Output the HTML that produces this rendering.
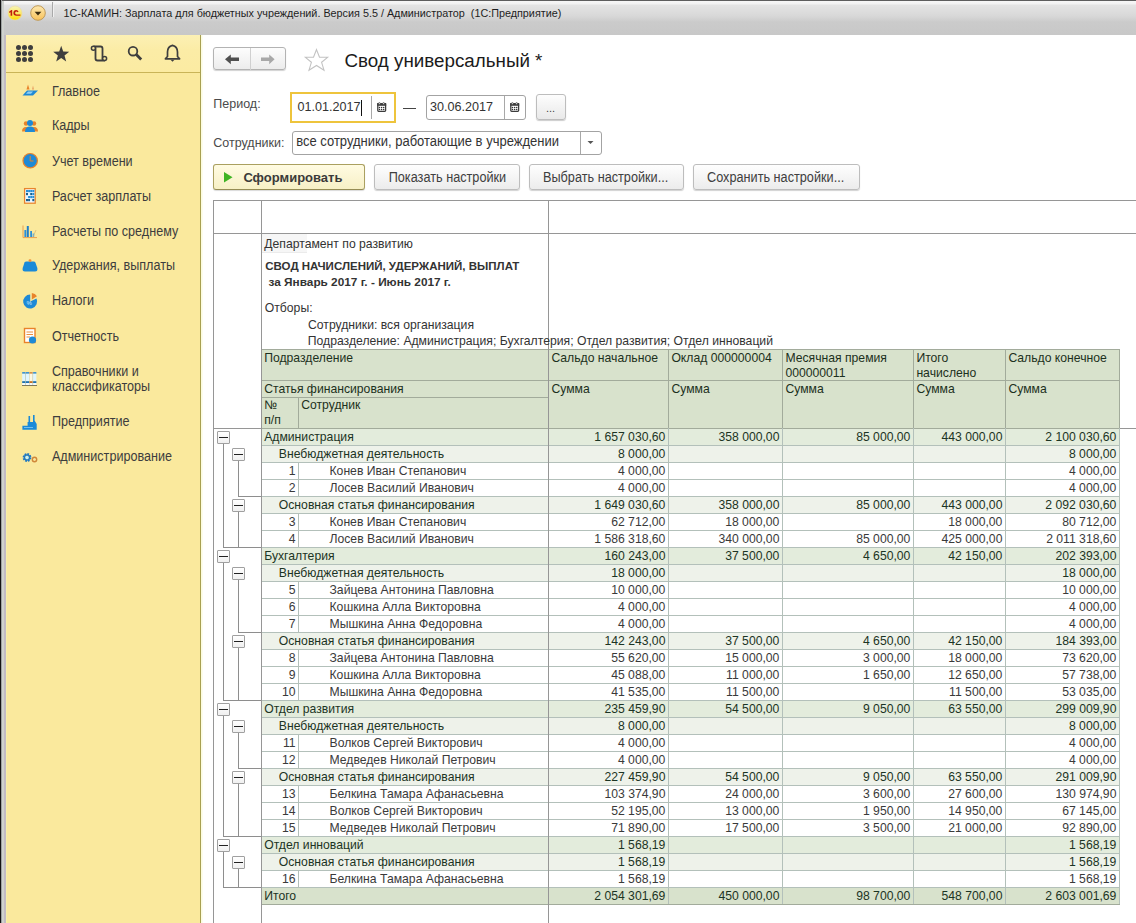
<!DOCTYPE html><html><head><meta charset="utf-8"><style>
html,body{margin:0;padding:0;}
body{width:1136px;height:923px;overflow:hidden;position:relative;background:#fff;font-family:"Liberation Sans", sans-serif;}
.t{position:absolute;white-space:pre;}
.r{position:absolute;}
svg{position:absolute;overflow:visible;}
</style></head><body>
<div class="r" style="left:0px;top:0px;width:1136px;height:35px;background:linear-gradient(#5e5e5e 0px,#5e5e5e 1px,#f7f7f7 1px,#f2f2f2 4px,#e4e4e4 5px,#d8d8d8 16px,#cbcbcb 22px,#c8c8c8 34px)"></div>
<div class="r" style="left:0px;top:0px;width:1px;height:923px;background:#151515"></div>
<div class="r" style="left:1px;top:0px;width:1px;height:923px;background:#9ea2a2"></div>
<div class="r" style="left:2px;top:1px;width:2px;height:922px;background:#cfd2ce"></div>
<div class="r" style="left:4px;top:35px;width:2px;height:888px;background:#c2bbc4"></div>
<svg style="left:6px;top:4px" width="20" height="20" viewBox="0 0 20 20">
<defs><linearGradient id="lg" x1="0" y1="0" x2="0" y2="1"><stop offset="0" stop-color="#f6f4b8"/><stop offset="0.55" stop-color="#fbe860"/><stop offset="1" stop-color="#ffdc00"/></linearGradient></defs>
<circle cx="9" cy="9" r="7" fill="url(#lg)" stroke="#ead9a0" stroke-width="0.6"/>
<path d="M3.2 7.4 L5.4 6 L6.2 6 L6.2 11.8 L4.6 11.8 L4.6 8.2 L3.2 8.9 Z" fill="#c01c0c"/>
<path d="M12.6 7.6 Q11.9 6.1 10.2 6.1 Q7.4 6.1 7.4 9 Q7.4 11.8 10.3 11.8 L14.4 11.8 L14.4 10.4 L10.4 10.4 Q9.1 10.4 9.1 9 Q9.1 7.5 10.3 7.5 Q11.1 7.5 11.3 8.2 Z" fill="#c01c0c"/>
</svg>
<svg style="left:29px;top:4px" width="20" height="20" viewBox="0 0 20 20">
<defs><linearGradient id="dg" x1="0" y1="0" x2="0" y2="1"><stop offset="0" stop-color="#fde9b0"/><stop offset="1" stop-color="#f8c25a"/></linearGradient></defs>
<circle cx="9" cy="9" r="7.3" fill="url(#dg)" stroke="#c09a58" stroke-width="1"/>
<path d="M5.6 7.8 L12.4 7.8 L9 11.4 Z" fill="#3a2c10"/>
</svg>
<div class="r" style="left:52px;top:2px;width:1px;height:15px;background:#a9a9a9"></div>
<div class="r" style="left:53px;top:2px;width:1px;height:15px;background:#f0f0f0"></div>
<div class="t" style="left:63.5px;top:7.13px;font-size:10.8px;line-height:12.409px;color:#1e1e1e;font-weight:normal;">1С-КАМИН: Зарплата для бюджетных учреждений. Версия 5.5 / Администратор  (1С:Предприятие)</div>
<div class="r" style="left:6px;top:35px;width:194px;height:888px;background:#fae99d"></div>
<div class="r" style="left:6px;top:35px;width:1px;height:888px;background:#f6efaa"></div>
<div class="r" style="left:200px;top:35px;width:1px;height:888px;background:#a8a052"></div>
<div class="r" style="left:201px;top:35px;width:2px;height:888px;background:linear-gradient(90deg,#fbfbd8,#fefef4)"></div>
<div class="r" style="left:6px;top:35px;width:194px;height:37px;background:linear-gradient(#fcf0b4,#fbeca6 40%,#fbeba2)"></div>
<div class="r" style="left:6px;top:72px;width:194px;height:1px;background:#c9b458"></div>
<svg style="left:0;top:0" width="200" height="72"><circle cx="18.5" cy="47.4" r="2.5" fill="#3e3e3e"/><circle cx="24.5" cy="47.4" r="2.5" fill="#3e3e3e"/><circle cx="30.5" cy="47.4" r="2.5" fill="#3e3e3e"/><circle cx="18.5" cy="53.4" r="2.5" fill="#3e3e3e"/><circle cx="24.5" cy="53.4" r="2.5" fill="#3e3e3e"/><circle cx="30.5" cy="53.4" r="2.5" fill="#3e3e3e"/><circle cx="18.5" cy="59.4" r="2.5" fill="#3e3e3e"/><circle cx="24.5" cy="59.4" r="2.5" fill="#3e3e3e"/><circle cx="30.5" cy="59.4" r="2.5" fill="#3e3e3e"/><path d="M61.2 45.8 L63.2 51.6 L69.2 51.8 L64.5 55.6 L66.2 61.5 L61.2 58 L56.2 61.5 L57.9 55.6 L53.2 51.8 L59.2 51.6 Z" fill="#3e3e3e"/><path d="M93.5 46.5 L100.5 46.5 Q102.5 46.5 102.5 48.5 L102.5 58.5 Q102.5 60.5 104.5 60.5 L97.5 60.5 Q95.5 60.5 95.5 58.5 L95.5 48.5 Q95.5 46.5 93.5 46.5" fill="none" stroke="#3e3e3e" stroke-width="1.8" stroke-linejoin="round"/><circle cx="93.4" cy="48.3" r="2" fill="#fae99d" stroke="#3e3e3e" stroke-width="1.5"/><circle cx="104.6" cy="58.6" r="2" fill="#fae99d" stroke="#3e3e3e" stroke-width="1.5"/><circle cx="133" cy="51.2" r="4.3" fill="none" stroke="#3e3e3e" stroke-width="1.8"/><path d="M136.3 54.5 L141.2 59.4" stroke="#3e3e3e" stroke-width="2.8"/><path d="M172.5 45.3 Q177.5 46.5 177.5 52 L177.5 56.5 L179.6 58.8 L165.4 58.8 L167.5 56.5 L167.5 52 Q167.5 46.5 172.5 45.3 Z" fill="none" stroke="#3e3e3e" stroke-width="1.7" stroke-linejoin="round"/><path d="M170.5 59.8 L174.5 59.8 L172.5 61.8 Z" fill="#3e3e3e"/></svg>
<div class="t" style="left:51.9px;top:84.70px;font-size:12.6px;line-height:14.477px;color:#3d3d3d;font-weight:normal;transform:scaleY(1.1);transform-origin:0 11.60px;">Главное</div>
<div class="t" style="left:51.9px;top:119.40px;font-size:12.6px;line-height:14.477px;color:#3d3d3d;font-weight:normal;transform:scaleY(1.1);transform-origin:0 11.60px;">Кадры</div>
<div class="t" style="left:51.9px;top:154.50px;font-size:12.6px;line-height:14.477px;color:#3d3d3d;font-weight:normal;transform:scaleY(1.1);transform-origin:0 11.60px;">Учет времени</div>
<div class="t" style="left:51.9px;top:189.60px;font-size:12.6px;line-height:14.477px;color:#3d3d3d;font-weight:normal;transform:scaleY(1.1);transform-origin:0 11.60px;">Расчет зарплаты</div>
<div class="t" style="left:51.9px;top:224.60px;font-size:12.6px;line-height:14.477px;color:#3d3d3d;font-weight:normal;transform:scaleY(1.1);transform-origin:0 11.60px;">Расчеты по среднему</div>
<div class="t" style="left:51.9px;top:259.40px;font-size:12.6px;line-height:14.477px;color:#3d3d3d;font-weight:normal;transform:scaleY(1.1);transform-origin:0 11.60px;">Удержания, выплаты</div>
<div class="t" style="left:51.9px;top:294.20px;font-size:12.6px;line-height:14.477px;color:#3d3d3d;font-weight:normal;transform:scaleY(1.1);transform-origin:0 11.60px;">Налоги</div>
<div class="t" style="left:51.9px;top:329.60px;font-size:12.6px;line-height:14.477px;color:#3d3d3d;font-weight:normal;transform:scaleY(1.1);transform-origin:0 11.60px;">Отчетность</div>
<div class="t" style="left:51.9px;top:364.80px;font-size:12.6px;line-height:14.477px;color:#3d3d3d;font-weight:normal;transform:scaleY(1.1);transform-origin:0 11.60px;">Справочники и</div>
<div class="t" style="left:51.9px;top:379.90px;font-size:12.6px;line-height:14.477px;color:#3d3d3d;font-weight:normal;transform:scaleY(1.1);transform-origin:0 11.60px;">классификаторы</div>
<div class="t" style="left:51.9px;top:415.20px;font-size:12.6px;line-height:14.477px;color:#3d3d3d;font-weight:normal;transform:scaleY(1.1);transform-origin:0 11.60px;">Предприятие</div>
<div class="t" style="left:51.9px;top:450.40px;font-size:12.6px;line-height:14.477px;color:#3d3d3d;font-weight:normal;transform:scaleY(1.1);transform-origin:0 11.60px;">Администрирование</div>
<svg style="left:0;top:0" width="200" height="480">
<!-- Главное -->
<path d="M22.5 95.5 L27 90.5 L38 90.5 L33 95.5 Z" fill="#1e8ad6"/>
<path d="M26 93.8 L28 91.6 L33 91.6 L31 93.8 Z" fill="#8fd0f5"/>
<path d="M26.5 89.5 L28 84.5 L29.5 89.5 Z" fill="#e8832a"/>
<path d="M32 89.5 L33 85.5 L34 89.5 Z" fill="#e8a060"/>
<!-- Кадры -->
<circle cx="26" cy="123.5" r="2.2" fill="#e8832a"/><circle cx="34" cy="123.5" r="2.2" fill="#e8832a"/>
<path d="M22 131.5 Q22 127 26 127 Q30 127 30 131.5Z" fill="#e8832a"/><path d="M30 131.5 Q30 127 34 127 Q38 127 38 131.5Z" fill="#e8832a"/>
<circle cx="30" cy="123" r="3" fill="#1e8ad6"/>
<path d="M25 132 Q25 126.5 30 126.5 Q35 126.5 35 132Z" fill="#1e8ad6"/>
<!-- Учет времени -->
<circle cx="30.2" cy="160.7" r="7.2" fill="#1e8ad6" stroke="#e8832a" stroke-width="1.2"/>
<path d="M30.2 156 L30.2 161 L33.5 161" stroke="#e8832a" stroke-width="1" fill="none"/>
<!-- Расчет зарплаты -->
<rect x="24.6" y="188.6" width="10.6" height="14.6" fill="#f4fbff" stroke="#e8862e" stroke-width="1.3"/>
<rect x="26.00" y="190.0" width="2" height="2.2" fill="#2a8fd6"/>
<rect x="28.10" y="190.0" width="2" height="2.2" fill="#2a8fd6"/>
<rect x="30.20" y="190.0" width="2" height="2.2" fill="#2a8fd6"/>
<rect x="32.30" y="190.0" width="2" height="2.2" fill="#2a8fd6"/>
<rect x="26.00" y="193.0" width="2" height="2.2" fill="#1a5f8a"/>
<rect x="28.10" y="193.0" width="2" height="2.2" fill="#dff4ff"/>
<rect x="30.20" y="193.0" width="2" height="2.2" fill="#1a5f8a"/>
<rect x="32.30" y="193.0" width="2" height="2.2" fill="#2a8fd6"/>
<rect x="26.00" y="196.0" width="2" height="2.2" fill="#dff4ff"/>
<rect x="28.10" y="196.0" width="2" height="2.2" fill="#2a8fd6"/>
<rect x="30.20" y="196.0" width="2" height="2.2" fill="#2a8fd6"/>
<rect x="32.30" y="196.0" width="2" height="2.2" fill="#2a8fd6"/>
<rect x="26.00" y="199.0" width="2" height="2.2" fill="#1a5f8a"/>
<rect x="28.10" y="199.0" width="2" height="2.2" fill="#1a5f8a"/>
<rect x="30.20" y="199.0" width="2" height="2.2" fill="#dff4ff"/>
<rect x="32.30" y="199.0" width="2" height="2.2" fill="#1a5f8a"/>
<!-- Расчеты по среднему -->
<path d="M23 225.5 L23 237.6 L37 237.6" stroke="#e9a050" stroke-width="1" fill="none"/>
<rect x="24.4" y="230" width="1.9" height="7" fill="#2a8fd6"/><rect x="26.8" y="226" width="2" height="11" fill="#1f7ec8"/>
<rect x="30.2" y="231" width="1.8" height="6" fill="#2a8fd6"/><rect x="32.6" y="233.5" width="1.6" height="3.5" fill="#5aaee8"/>
<path d="M33 237 L36 230" stroke="#c8b070" stroke-width="0.6"/>
<!-- Удержания -->
<path d="M24.5 262.6 Q25 261.5 26.5 261.5 L33.5 261.5 Q35 261.5 35.5 262.8 L37.3 268 Q38 271.6 35 271.6 L25 271.6 Q22 271.6 22.7 268 Z" fill="#1a8ad8"/>
<circle cx="30" cy="260.6" r="1.4" fill="#f0903a"/>
<!-- Налоги -->
<path d="M30.2 301.5 L30.2 294.5 A7 7 0 1 0 36.5 298.5 Z" fill="#1e8ad6"/>
<path d="M31.8 299.5 L31.8 293 A6.5 6.5 0 0 1 37 296.2 Z" fill="#e8832a"/>
<text x="26.5" y="305" font-family="Liberation Sans" font-size="6" fill="#cfeaff">%</text>
<!-- Отчетность -->
<rect x="24.5" y="328.5" width="10.5" height="14" fill="#fff" stroke="#e8832a" stroke-width="1.4"/>
<path d="M26.5 332 L33 332 M26.5 334.5 L33 334.5 M26.5 337 L30 337" stroke="#e8832a" stroke-width="0.9"/>
<circle cx="32.5" cy="340" r="3.6" fill="#1e8ad6"/>
<!-- Справочники -->
<rect x="22.20" y="372" width="3.2" height="1.8" fill="#3d93d2"/>
<rect x="22.20" y="373.8" width="3.2" height="7.4" fill="#dff5ff"/>
<rect x="22.20" y="381.2" width="3.2" height="1.9" fill="#1a70b4"/>
<rect x="22.20" y="383.1" width="3.2" height="2" fill="#f4fbff"/>
<rect x="25.40" y="372" width="0.45" height="13" fill="#8aa8b8"/>
<rect x="25.85" y="372" width="3.2" height="1.8" fill="#3d93d2"/>
<rect x="25.85" y="373.8" width="3.2" height="7.4" fill="#dff5ff"/>
<rect x="25.85" y="381.2" width="3.2" height="1.9" fill="#1a70b4"/>
<rect x="25.85" y="383.1" width="3.2" height="2" fill="#f4fbff"/>
<rect x="29.05" y="372" width="0.45" height="13" fill="#8aa8b8"/>
<rect x="29.50" y="372" width="3.2" height="1.8" fill="#d9904a"/>
<rect x="29.50" y="373.8" width="3.2" height="7.4" fill="#fff8e0"/>
<rect x="29.50" y="381.2" width="3.2" height="1.9" fill="#c66f22"/>
<rect x="29.50" y="383.1" width="3.2" height="2" fill="#f4fbff"/>
<rect x="32.70" y="372" width="0.45" height="13" fill="#8aa8b8"/>
<rect x="33.15" y="372" width="3.2" height="1.8" fill="#3d93d2"/>
<rect x="33.15" y="373.8" width="3.2" height="7.4" fill="#dff5ff"/>
<rect x="33.15" y="381.2" width="3.2" height="1.9" fill="#1a70b4"/>
<rect x="33.15" y="383.1" width="3.2" height="2" fill="#f4fbff"/>
<rect x="22" y="385.1" width="15" height="0.9" fill="#6f6a50"/>
<!-- Предприятие -->
<path d="M22.4 429.7 L22.4 425.8 L27.6 425.8 L27.6 422 L28.5 422 L28.5 416 L30.1 416 L30.1 422 L33 422 L33 415 L34.6 415 L34.6 420.5 L36.7 424 L36.7 429.7 Z" fill="#1a8ad8"/>
<rect x="24" y="427" width="9" height="0.9" fill="#7cc4f0"/>
<!-- Администрирование -->
<circle cx="27" cy="457.5" r="1.6" fill="#c4f2ff"/><circle cx="27" cy="457.5" r="3.2" fill="none" stroke="#1f78c2" stroke-width="2.4" stroke-dasharray="1.6 0.9"/>
<circle cx="27" cy="457.5" r="2.6" fill="none" stroke="#1f78c2" stroke-width="1.4"/>
<circle cx="34.5" cy="459.5" r="2.2" fill="none" stroke="#d0883a" stroke-width="1.4"/>
</svg>
<div class="r" style="left:213px;top:47px;width:73px;height:23px;box-sizing:border-box;border:1px solid #b3b3b3;border-radius:3px;background:linear-gradient(#fdfdfd,#ececec);box-shadow:0 1px 1px rgba(0,0,0,0.18)"></div>
<div class="r" style="left:250px;top:48px;width:1px;height:22px;background:#d0d0d0"></div>
<svg style="left:0;top:0" width="400" height="90">
<path d="M225 59.3 L230.8 54.4 L230.8 57.6 L239 57.6 L239 61 L230.8 61 L230.8 64.2 Z" fill="#4f4f4f"/>
<path d="M274.6 59.3 L269.2 54.4 L269.2 57.6 L261 57.6 L261 61 L269.2 61 L269.2 64.2 Z" fill="#a8a8a8"/>
<path d="M316.5 49.6 L319.5 57.3 L327.6 57.3 L321.6 62.3 L324 70.2 L316.5 65.5 L309 70.2 L311.4 62.3 L305.4 57.3 L313.5 57.3 Z" fill="none" stroke="#c2c2c2" stroke-width="1.1" stroke-linejoin="miter"/>
</svg>
<div class="t" style="left:344.5px;top:50.09px;font-size:18.8px;line-height:21.601px;color:#1b1b1b;font-weight:normal;">Свод универсальный *</div>
<div class="t" style="left:213.3px;top:96.69px;font-size:12.5px;line-height:14.363px;color:#4a4a4a;font-weight:normal;transform:scaleY(1.08);transform-origin:0 11.51px;">Период:</div>
<div class="r" style="left:290px;top:92px;width:106px;height:31px;box-sizing:border-box;border:2px solid #eec43c;background:#fff"></div>
<div class="t" style="left:297.5px;top:100.40px;font-size:12.6px;line-height:14.477px;color:#333;font-weight:normal;transform:scaleY(1.08);transform-origin:0 11.60px;">01.01.2017</div>
<div class="r" style="left:361px;top:100px;width:1px;height:16px;background:#111"></div>
<div class="r" style="left:371px;top:96px;width:1px;height:23px;background:#a8a8a8"></div>
<svg style="left:0;top:0" width="600" height="130"><rect x="377.8" y="103.6" width="7.8" height="7.8" rx="0.8" fill="#fff" stroke="#3c3c3c" stroke-width="1.3"/><rect x="377.2" y="103" width="9" height="2.8" fill="#3c3c3c"/><circle cx="379.4" cy="103.5" r="0.9" fill="#fff" stroke="#3c3c3c" stroke-width="0.7"/><circle cx="383.59999999999997" cy="103.5" r="0.9" fill="#fff" stroke="#3c3c3c" stroke-width="0.7"/><circle cx="379.5" cy="107.4" r="0.75" fill="#333"/><circle cx="379.5" cy="109.4" r="0.75" fill="#333"/><circle cx="381.6" cy="107.4" r="0.75" fill="#333"/><circle cx="381.6" cy="109.4" r="0.75" fill="#333"/><circle cx="383.7" cy="107.4" r="0.75" fill="#333"/><circle cx="383.7" cy="109.4" r="0.75" fill="#333"/></svg>
<div class="r" style="left:403px;top:108px;width:13px;height:1px;background:#444"></div>
<div class="r" style="left:426px;top:95px;width:100px;height:25px;box-sizing:border-box;border:1px solid #a3a3a3;border-radius:3px;background:#fff"></div>
<div class="t" style="left:430px;top:100.10px;font-size:12.6px;line-height:14.477px;color:#333;font-weight:normal;transform:scaleY(1.08);transform-origin:0 11.60px;">30.06.2017</div>
<div class="r" style="left:504px;top:96px;width:1px;height:23px;background:#a8a8a8"></div>
<svg style="left:0;top:0" width="600" height="130"><rect x="510.8" y="103.6" width="7.8" height="7.8" rx="0.8" fill="#fff" stroke="#3c3c3c" stroke-width="1.3"/><rect x="510.2" y="103" width="9" height="2.8" fill="#3c3c3c"/><circle cx="512.4" cy="103.5" r="0.9" fill="#fff" stroke="#3c3c3c" stroke-width="0.7"/><circle cx="516.6" cy="103.5" r="0.9" fill="#fff" stroke="#3c3c3c" stroke-width="0.7"/><circle cx="512.5" cy="107.4" r="0.75" fill="#333"/><circle cx="512.5" cy="109.4" r="0.75" fill="#333"/><circle cx="514.6" cy="107.4" r="0.75" fill="#333"/><circle cx="514.6" cy="109.4" r="0.75" fill="#333"/><circle cx="516.7" cy="107.4" r="0.75" fill="#333"/><circle cx="516.7" cy="109.4" r="0.75" fill="#333"/></svg>
<div class="r" style="left:536px;top:94px;width:30px;height:26px;box-sizing:border-box;border:1px solid #bdbdbd;border-radius:3px;background:linear-gradient(#fdfdfd,#e9e9e9);box-shadow:0 1px 1px rgba(0,0,0,0.2)"></div>
<div class="t" style="left:546px;top:102.05px;font-size:11px;line-height:12.639px;color:#444;font-weight:normal;">...</div>
<div class="t" style="left:213.3px;top:136.19px;font-size:12.5px;line-height:14.363px;color:#4a4a4a;font-weight:normal;transform:scaleY(1.08);transform-origin:0 11.51px;">Сотрудники:</div>
<div class="r" style="left:292px;top:131px;width:310px;height:24px;box-sizing:border-box;border:1px solid #a3a3a3;border-radius:3px;background:#fff"></div>
<div class="t" style="left:296.2px;top:135.44px;font-size:13px;line-height:14.937px;color:#333;font-weight:normal;transform:scaleY(1.07);transform-origin:0 11.97px;">все сотрудники, работающие в учреждении</div>
<div class="r" style="left:580px;top:132px;width:1px;height:22px;background:#a8a8a8"></div>
<svg style="left:586px;top:140px" width="10" height="6"><path d="M1.5 1 L7.5 1 L4.5 4 Z" fill="#555"/></svg>
<div class="r" style="left:213px;top:164px;width:152px;height:26px;box-sizing:border-box;border:1px solid #aaa060;border-bottom-color:#958c55;border-radius:3px;background:linear-gradient(#fffbe2,#f7f0c6);box-shadow:0 1px 1px rgba(0,0,0,0.15)"></div>
<svg style="left:222px;top:170px" width="14" height="14"><path d="M2 2 L10.5 7.3 L2 12.6 Z" fill="#3fb424"/></svg>
<div class="t" style="left:243.4px;top:170.83px;font-size:13px;line-height:14.937px;color:#3a3a3a;font-weight:bold;transform:scaleY(1.05);transform-origin:0 11.97px;">Сформировать</div>
<div class="r" style="left:374px;top:164px;width:146px;height:26px;box-sizing:border-box;border:1px solid #bdbdbd;border-radius:3px;background:linear-gradient(#fefefe,#ececec);box-shadow:0 1px 1px rgba(0,0,0,0.18)"></div>
<div class="t" style="left:388.7px;top:170.51px;font-size:12.7px;line-height:14.592px;color:#404040;font-weight:normal;transform:scaleY(1.08);transform-origin:0 11.70px;">Показать настройки</div>
<div class="r" style="left:529px;top:164px;width:155px;height:26px;box-sizing:border-box;border:1px solid #bdbdbd;border-radius:3px;background:linear-gradient(#fefefe,#ececec);box-shadow:0 1px 1px rgba(0,0,0,0.18)"></div>
<div class="t" style="left:543px;top:170.51px;font-size:12.7px;line-height:14.592px;color:#404040;font-weight:normal;transform:scaleY(1.08);transform-origin:0 11.70px;">Выбрать настройки...</div>
<div class="r" style="left:693px;top:164px;width:167px;height:26px;box-sizing:border-box;border:1px solid #bdbdbd;border-radius:3px;background:linear-gradient(#fefefe,#ececec);box-shadow:0 1px 1px rgba(0,0,0,0.18)"></div>
<div class="t" style="left:707px;top:170.51px;font-size:12.7px;line-height:14.592px;color:#404040;font-weight:normal;transform:scaleY(1.08);transform-origin:0 11.70px;">Сохранить настройки...</div>
<div class="r" style="left:261px;top:349px;width:858px;height:79px;background:#d8e2cc"></div>
<div class="r" style="left:262px;top:429px;width:857px;height:16px;background:#e3ecdc"></div>
<div class="r" style="left:262px;top:446px;width:857px;height:16px;background:#eef2ea"></div>
<div class="r" style="left:262px;top:497px;width:857px;height:16px;background:#eef2ea"></div>
<div class="r" style="left:262px;top:548px;width:857px;height:16px;background:#e3ecdc"></div>
<div class="r" style="left:262px;top:565px;width:857px;height:16px;background:#eef2ea"></div>
<div class="r" style="left:262px;top:633px;width:857px;height:16px;background:#eef2ea"></div>
<div class="r" style="left:262px;top:701px;width:857px;height:16px;background:#e3ecdc"></div>
<div class="r" style="left:262px;top:718px;width:857px;height:16px;background:#eef2ea"></div>
<div class="r" style="left:262px;top:769px;width:857px;height:16px;background:#eef2ea"></div>
<div class="r" style="left:262px;top:837px;width:857px;height:16px;background:#e3ecdc"></div>
<div class="r" style="left:262px;top:854px;width:857px;height:16px;background:#eef2ea"></div>
<div class="r" style="left:262px;top:888px;width:857px;height:16px;background:#d8e2cc"></div>
<div class="r" style="left:261px;top:428px;width:859px;height:1px;background:#a2ab9b"></div>
<div class="r" style="left:261px;top:445px;width:859px;height:1px;background:#b3c0ba"></div>
<div class="r" style="left:261px;top:462px;width:859px;height:1px;background:#b3c0ba"></div>
<div class="r" style="left:261px;top:479px;width:859px;height:1px;background:#b3c0ba"></div>
<div class="r" style="left:261px;top:496px;width:859px;height:1px;background:#b3c0ba"></div>
<div class="r" style="left:261px;top:513px;width:859px;height:1px;background:#b3c0ba"></div>
<div class="r" style="left:261px;top:530px;width:859px;height:1px;background:#b3c0ba"></div>
<div class="r" style="left:261px;top:547px;width:859px;height:1px;background:#b3c0ba"></div>
<div class="r" style="left:261px;top:564px;width:859px;height:1px;background:#b3c0ba"></div>
<div class="r" style="left:261px;top:581px;width:859px;height:1px;background:#b3c0ba"></div>
<div class="r" style="left:261px;top:598px;width:859px;height:1px;background:#b3c0ba"></div>
<div class="r" style="left:261px;top:615px;width:859px;height:1px;background:#b3c0ba"></div>
<div class="r" style="left:261px;top:632px;width:859px;height:1px;background:#b3c0ba"></div>
<div class="r" style="left:261px;top:649px;width:859px;height:1px;background:#b3c0ba"></div>
<div class="r" style="left:261px;top:666px;width:859px;height:1px;background:#b3c0ba"></div>
<div class="r" style="left:261px;top:683px;width:859px;height:1px;background:#b3c0ba"></div>
<div class="r" style="left:261px;top:700px;width:859px;height:1px;background:#b3c0ba"></div>
<div class="r" style="left:261px;top:717px;width:859px;height:1px;background:#b3c0ba"></div>
<div class="r" style="left:261px;top:734px;width:859px;height:1px;background:#b3c0ba"></div>
<div class="r" style="left:261px;top:751px;width:859px;height:1px;background:#b3c0ba"></div>
<div class="r" style="left:261px;top:768px;width:859px;height:1px;background:#b3c0ba"></div>
<div class="r" style="left:261px;top:785px;width:859px;height:1px;background:#b3c0ba"></div>
<div class="r" style="left:261px;top:802px;width:859px;height:1px;background:#b3c0ba"></div>
<div class="r" style="left:261px;top:819px;width:859px;height:1px;background:#b3c0ba"></div>
<div class="r" style="left:261px;top:836px;width:859px;height:1px;background:#b3c0ba"></div>
<div class="r" style="left:261px;top:853px;width:859px;height:1px;background:#b3c0ba"></div>
<div class="r" style="left:261px;top:870px;width:859px;height:1px;background:#b3c0ba"></div>
<div class="r" style="left:261px;top:887px;width:859px;height:1px;background:#b3c0ba"></div>
<div class="r" style="left:261px;top:904px;width:859px;height:1px;background:#a2ab9b"></div>
<div class="r" style="left:298px;top:462px;width:1px;height:17px;background:#b3c0ba"></div>
<div class="r" style="left:298px;top:479px;width:1px;height:17px;background:#b3c0ba"></div>
<div class="r" style="left:298px;top:513px;width:1px;height:17px;background:#b3c0ba"></div>
<div class="r" style="left:298px;top:530px;width:1px;height:17px;background:#b3c0ba"></div>
<div class="r" style="left:298px;top:581px;width:1px;height:17px;background:#b3c0ba"></div>
<div class="r" style="left:298px;top:598px;width:1px;height:17px;background:#b3c0ba"></div>
<div class="r" style="left:298px;top:615px;width:1px;height:17px;background:#b3c0ba"></div>
<div class="r" style="left:298px;top:649px;width:1px;height:17px;background:#b3c0ba"></div>
<div class="r" style="left:298px;top:666px;width:1px;height:17px;background:#b3c0ba"></div>
<div class="r" style="left:298px;top:683px;width:1px;height:17px;background:#b3c0ba"></div>
<div class="r" style="left:298px;top:734px;width:1px;height:17px;background:#b3c0ba"></div>
<div class="r" style="left:298px;top:751px;width:1px;height:17px;background:#b3c0ba"></div>
<div class="r" style="left:298px;top:785px;width:1px;height:17px;background:#b3c0ba"></div>
<div class="r" style="left:298px;top:802px;width:1px;height:17px;background:#b3c0ba"></div>
<div class="r" style="left:298px;top:819px;width:1px;height:17px;background:#b3c0ba"></div>
<div class="r" style="left:298px;top:870px;width:1px;height:17px;background:#b3c0ba"></div>
<div class="r" style="left:668px;top:428px;width:1px;height:476px;background:#b3c0ba"></div>
<div class="r" style="left:782px;top:428px;width:1px;height:476px;background:#b3c0ba"></div>
<div class="r" style="left:913px;top:428px;width:1px;height:476px;background:#b3c0ba"></div>
<div class="r" style="left:1005px;top:428px;width:1px;height:476px;background:#b3c0ba"></div>
<div class="r" style="left:1119px;top:428px;width:1px;height:476px;background:#b3c0ba"></div>
<div class="r" style="left:261px;top:349px;width:859px;height:1px;background:#a2ab9b"></div>
<div class="r" style="left:261px;top:380px;width:859px;height:1px;background:#a2ab9b"></div>
<div class="r" style="left:261px;top:397px;width:287px;height:1px;background:#a2ab9b"></div>
<div class="r" style="left:298px;top:397px;width:1px;height:31px;background:#a2ab9b"></div>
<div class="r" style="left:668px;top:349px;width:1px;height:79px;background:#a2ab9b"></div>
<div class="r" style="left:782px;top:349px;width:1px;height:79px;background:#a2ab9b"></div>
<div class="r" style="left:913px;top:349px;width:1px;height:79px;background:#a2ab9b"></div>
<div class="r" style="left:1005px;top:349px;width:1px;height:79px;background:#a2ab9b"></div>
<div class="r" style="left:1119px;top:349px;width:1px;height:79px;background:#a2ab9b"></div>
<div class="r" style="left:213px;top:200px;width:923px;height:1px;background:#969696"></div>
<div class="r" style="left:213px;top:233px;width:923px;height:1px;background:#969696"></div>
<div class="r" style="left:213px;top:428px;width:48px;height:1px;background:#969696"></div>
<div class="r" style="left:1120px;top:428px;width:16px;height:1px;background:#969696"></div>
<div class="r" style="left:213px;top:200px;width:1px;height:723px;background:#969696"></div>
<div class="r" style="left:261px;top:200px;width:1px;height:723px;background:#969696"></div>
<div class="r" style="left:548px;top:200px;width:1px;height:723px;background:#969696"></div>
<div class="t" style="left:264.2px;top:429.56px;font-size:12.2px;line-height:14.018px;color:#1c3424;font-weight:normal;">Администрация</div>
<div class="t" style="right:470.6px;top:429.56px;font-size:12.2px;line-height:14.018px;color:#1c3424;font-weight:normal;">1 657 030,60</div>
<div class="t" style="right:356.6px;top:429.56px;font-size:12.2px;line-height:14.018px;color:#1c3424;font-weight:normal;">358 000,00</div>
<div class="t" style="right:225.60000000000002px;top:429.56px;font-size:12.2px;line-height:14.018px;color:#1c3424;font-weight:normal;">85 000,00</div>
<div class="t" style="right:133.60000000000002px;top:429.56px;font-size:12.2px;line-height:14.018px;color:#1c3424;font-weight:normal;">443 000,00</div>
<div class="t" style="right:19.59999999999991px;top:429.56px;font-size:12.2px;line-height:14.018px;color:#1c3424;font-weight:normal;">2 100 030,60</div>
<div class="t" style="left:278.8px;top:446.56px;font-size:12.2px;line-height:14.018px;color:#1c3424;font-weight:normal;">Внебюджетная деятельность</div>
<div class="t" style="right:470.6px;top:446.56px;font-size:12.2px;line-height:14.018px;color:#1c3424;font-weight:normal;">8 000,00</div>
<div class="t" style="right:19.59999999999991px;top:446.56px;font-size:12.2px;line-height:14.018px;color:#1c3424;font-weight:normal;">8 000,00</div>
<div class="t" style="right:840.4px;top:463.56px;font-size:12.2px;line-height:14.018px;color:#3a3a3a;font-weight:normal;">1</div>
<div class="t" style="left:329.5px;top:463.56px;font-size:12.2px;line-height:14.018px;color:#3a3a3a;font-weight:normal;">Конев Иван Степанович</div>
<div class="t" style="right:470.6px;top:463.56px;font-size:12.2px;line-height:14.018px;color:#3a3a3a;font-weight:normal;">4 000,00</div>
<div class="t" style="right:19.59999999999991px;top:463.56px;font-size:12.2px;line-height:14.018px;color:#3a3a3a;font-weight:normal;">4 000,00</div>
<div class="t" style="right:840.4px;top:480.56px;font-size:12.2px;line-height:14.018px;color:#3a3a3a;font-weight:normal;">2</div>
<div class="t" style="left:329.5px;top:480.56px;font-size:12.2px;line-height:14.018px;color:#3a3a3a;font-weight:normal;">Лосев Василий Иванович</div>
<div class="t" style="right:470.6px;top:480.56px;font-size:12.2px;line-height:14.018px;color:#3a3a3a;font-weight:normal;">4 000,00</div>
<div class="t" style="right:19.59999999999991px;top:480.56px;font-size:12.2px;line-height:14.018px;color:#3a3a3a;font-weight:normal;">4 000,00</div>
<div class="t" style="left:278.8px;top:497.56px;font-size:12.2px;line-height:14.018px;color:#1c3424;font-weight:normal;">Основная статья финансирования</div>
<div class="t" style="right:470.6px;top:497.56px;font-size:12.2px;line-height:14.018px;color:#1c3424;font-weight:normal;">1 649 030,60</div>
<div class="t" style="right:356.6px;top:497.56px;font-size:12.2px;line-height:14.018px;color:#1c3424;font-weight:normal;">358 000,00</div>
<div class="t" style="right:225.60000000000002px;top:497.56px;font-size:12.2px;line-height:14.018px;color:#1c3424;font-weight:normal;">85 000,00</div>
<div class="t" style="right:133.60000000000002px;top:497.56px;font-size:12.2px;line-height:14.018px;color:#1c3424;font-weight:normal;">443 000,00</div>
<div class="t" style="right:19.59999999999991px;top:497.56px;font-size:12.2px;line-height:14.018px;color:#1c3424;font-weight:normal;">2 092 030,60</div>
<div class="t" style="right:840.4px;top:514.56px;font-size:12.2px;line-height:14.018px;color:#3a3a3a;font-weight:normal;">3</div>
<div class="t" style="left:329.5px;top:514.56px;font-size:12.2px;line-height:14.018px;color:#3a3a3a;font-weight:normal;">Конев Иван Степанович</div>
<div class="t" style="right:470.6px;top:514.56px;font-size:12.2px;line-height:14.018px;color:#3a3a3a;font-weight:normal;">62 712,00</div>
<div class="t" style="right:356.6px;top:514.56px;font-size:12.2px;line-height:14.018px;color:#3a3a3a;font-weight:normal;">18 000,00</div>
<div class="t" style="right:133.60000000000002px;top:514.56px;font-size:12.2px;line-height:14.018px;color:#3a3a3a;font-weight:normal;">18 000,00</div>
<div class="t" style="right:19.59999999999991px;top:514.56px;font-size:12.2px;line-height:14.018px;color:#3a3a3a;font-weight:normal;">80 712,00</div>
<div class="t" style="right:840.4px;top:531.56px;font-size:12.2px;line-height:14.018px;color:#3a3a3a;font-weight:normal;">4</div>
<div class="t" style="left:329.5px;top:531.56px;font-size:12.2px;line-height:14.018px;color:#3a3a3a;font-weight:normal;">Лосев Василий Иванович</div>
<div class="t" style="right:470.6px;top:531.56px;font-size:12.2px;line-height:14.018px;color:#3a3a3a;font-weight:normal;">1 586 318,60</div>
<div class="t" style="right:356.6px;top:531.56px;font-size:12.2px;line-height:14.018px;color:#3a3a3a;font-weight:normal;">340 000,00</div>
<div class="t" style="right:225.60000000000002px;top:531.56px;font-size:12.2px;line-height:14.018px;color:#3a3a3a;font-weight:normal;">85 000,00</div>
<div class="t" style="right:133.60000000000002px;top:531.56px;font-size:12.2px;line-height:14.018px;color:#3a3a3a;font-weight:normal;">425 000,00</div>
<div class="t" style="right:19.59999999999991px;top:531.56px;font-size:12.2px;line-height:14.018px;color:#3a3a3a;font-weight:normal;">2 011 318,60</div>
<div class="t" style="left:264.2px;top:548.56px;font-size:12.2px;line-height:14.018px;color:#1c3424;font-weight:normal;">Бухгалтерия</div>
<div class="t" style="right:470.6px;top:548.56px;font-size:12.2px;line-height:14.018px;color:#1c3424;font-weight:normal;">160 243,00</div>
<div class="t" style="right:356.6px;top:548.56px;font-size:12.2px;line-height:14.018px;color:#1c3424;font-weight:normal;">37 500,00</div>
<div class="t" style="right:225.60000000000002px;top:548.56px;font-size:12.2px;line-height:14.018px;color:#1c3424;font-weight:normal;">4 650,00</div>
<div class="t" style="right:133.60000000000002px;top:548.56px;font-size:12.2px;line-height:14.018px;color:#1c3424;font-weight:normal;">42 150,00</div>
<div class="t" style="right:19.59999999999991px;top:548.56px;font-size:12.2px;line-height:14.018px;color:#1c3424;font-weight:normal;">202 393,00</div>
<div class="t" style="left:278.8px;top:565.56px;font-size:12.2px;line-height:14.018px;color:#1c3424;font-weight:normal;">Внебюджетная деятельность</div>
<div class="t" style="right:470.6px;top:565.56px;font-size:12.2px;line-height:14.018px;color:#1c3424;font-weight:normal;">18 000,00</div>
<div class="t" style="right:19.59999999999991px;top:565.56px;font-size:12.2px;line-height:14.018px;color:#1c3424;font-weight:normal;">18 000,00</div>
<div class="t" style="right:840.4px;top:582.56px;font-size:12.2px;line-height:14.018px;color:#3a3a3a;font-weight:normal;">5</div>
<div class="t" style="left:329.5px;top:582.56px;font-size:12.2px;line-height:14.018px;color:#3a3a3a;font-weight:normal;">Зайцева Антонина Павловна</div>
<div class="t" style="right:470.6px;top:582.56px;font-size:12.2px;line-height:14.018px;color:#3a3a3a;font-weight:normal;">10 000,00</div>
<div class="t" style="right:19.59999999999991px;top:582.56px;font-size:12.2px;line-height:14.018px;color:#3a3a3a;font-weight:normal;">10 000,00</div>
<div class="t" style="right:840.4px;top:599.56px;font-size:12.2px;line-height:14.018px;color:#3a3a3a;font-weight:normal;">6</div>
<div class="t" style="left:329.5px;top:599.56px;font-size:12.2px;line-height:14.018px;color:#3a3a3a;font-weight:normal;">Кошкина Алла Викторовна</div>
<div class="t" style="right:470.6px;top:599.56px;font-size:12.2px;line-height:14.018px;color:#3a3a3a;font-weight:normal;">4 000,00</div>
<div class="t" style="right:19.59999999999991px;top:599.56px;font-size:12.2px;line-height:14.018px;color:#3a3a3a;font-weight:normal;">4 000,00</div>
<div class="t" style="right:840.4px;top:616.56px;font-size:12.2px;line-height:14.018px;color:#3a3a3a;font-weight:normal;">7</div>
<div class="t" style="left:329.5px;top:616.56px;font-size:12.2px;line-height:14.018px;color:#3a3a3a;font-weight:normal;">Мышкина Анна Федоровна</div>
<div class="t" style="right:470.6px;top:616.56px;font-size:12.2px;line-height:14.018px;color:#3a3a3a;font-weight:normal;">4 000,00</div>
<div class="t" style="right:19.59999999999991px;top:616.56px;font-size:12.2px;line-height:14.018px;color:#3a3a3a;font-weight:normal;">4 000,00</div>
<div class="t" style="left:278.8px;top:633.56px;font-size:12.2px;line-height:14.018px;color:#1c3424;font-weight:normal;">Основная статья финансирования</div>
<div class="t" style="right:470.6px;top:633.56px;font-size:12.2px;line-height:14.018px;color:#1c3424;font-weight:normal;">142 243,00</div>
<div class="t" style="right:356.6px;top:633.56px;font-size:12.2px;line-height:14.018px;color:#1c3424;font-weight:normal;">37 500,00</div>
<div class="t" style="right:225.60000000000002px;top:633.56px;font-size:12.2px;line-height:14.018px;color:#1c3424;font-weight:normal;">4 650,00</div>
<div class="t" style="right:133.60000000000002px;top:633.56px;font-size:12.2px;line-height:14.018px;color:#1c3424;font-weight:normal;">42 150,00</div>
<div class="t" style="right:19.59999999999991px;top:633.56px;font-size:12.2px;line-height:14.018px;color:#1c3424;font-weight:normal;">184 393,00</div>
<div class="t" style="right:840.4px;top:650.56px;font-size:12.2px;line-height:14.018px;color:#3a3a3a;font-weight:normal;">8</div>
<div class="t" style="left:329.5px;top:650.56px;font-size:12.2px;line-height:14.018px;color:#3a3a3a;font-weight:normal;">Зайцева Антонина Павловна</div>
<div class="t" style="right:470.6px;top:650.56px;font-size:12.2px;line-height:14.018px;color:#3a3a3a;font-weight:normal;">55 620,00</div>
<div class="t" style="right:356.6px;top:650.56px;font-size:12.2px;line-height:14.018px;color:#3a3a3a;font-weight:normal;">15 000,00</div>
<div class="t" style="right:225.60000000000002px;top:650.56px;font-size:12.2px;line-height:14.018px;color:#3a3a3a;font-weight:normal;">3 000,00</div>
<div class="t" style="right:133.60000000000002px;top:650.56px;font-size:12.2px;line-height:14.018px;color:#3a3a3a;font-weight:normal;">18 000,00</div>
<div class="t" style="right:19.59999999999991px;top:650.56px;font-size:12.2px;line-height:14.018px;color:#3a3a3a;font-weight:normal;">73 620,00</div>
<div class="t" style="right:840.4px;top:667.56px;font-size:12.2px;line-height:14.018px;color:#3a3a3a;font-weight:normal;">9</div>
<div class="t" style="left:329.5px;top:667.56px;font-size:12.2px;line-height:14.018px;color:#3a3a3a;font-weight:normal;">Кошкина Алла Викторовна</div>
<div class="t" style="right:470.6px;top:667.56px;font-size:12.2px;line-height:14.018px;color:#3a3a3a;font-weight:normal;">45 088,00</div>
<div class="t" style="right:356.6px;top:667.56px;font-size:12.2px;line-height:14.018px;color:#3a3a3a;font-weight:normal;">11 000,00</div>
<div class="t" style="right:225.60000000000002px;top:667.56px;font-size:12.2px;line-height:14.018px;color:#3a3a3a;font-weight:normal;">1 650,00</div>
<div class="t" style="right:133.60000000000002px;top:667.56px;font-size:12.2px;line-height:14.018px;color:#3a3a3a;font-weight:normal;">12 650,00</div>
<div class="t" style="right:19.59999999999991px;top:667.56px;font-size:12.2px;line-height:14.018px;color:#3a3a3a;font-weight:normal;">57 738,00</div>
<div class="t" style="right:840.4px;top:684.56px;font-size:12.2px;line-height:14.018px;color:#3a3a3a;font-weight:normal;">10</div>
<div class="t" style="left:329.5px;top:684.56px;font-size:12.2px;line-height:14.018px;color:#3a3a3a;font-weight:normal;">Мышкина Анна Федоровна</div>
<div class="t" style="right:470.6px;top:684.56px;font-size:12.2px;line-height:14.018px;color:#3a3a3a;font-weight:normal;">41 535,00</div>
<div class="t" style="right:356.6px;top:684.56px;font-size:12.2px;line-height:14.018px;color:#3a3a3a;font-weight:normal;">11 500,00</div>
<div class="t" style="right:133.60000000000002px;top:684.56px;font-size:12.2px;line-height:14.018px;color:#3a3a3a;font-weight:normal;">11 500,00</div>
<div class="t" style="right:19.59999999999991px;top:684.56px;font-size:12.2px;line-height:14.018px;color:#3a3a3a;font-weight:normal;">53 035,00</div>
<div class="t" style="left:264.2px;top:701.56px;font-size:12.2px;line-height:14.018px;color:#1c3424;font-weight:normal;">Отдел развития</div>
<div class="t" style="right:470.6px;top:701.56px;font-size:12.2px;line-height:14.018px;color:#1c3424;font-weight:normal;">235 459,90</div>
<div class="t" style="right:356.6px;top:701.56px;font-size:12.2px;line-height:14.018px;color:#1c3424;font-weight:normal;">54 500,00</div>
<div class="t" style="right:225.60000000000002px;top:701.56px;font-size:12.2px;line-height:14.018px;color:#1c3424;font-weight:normal;">9 050,00</div>
<div class="t" style="right:133.60000000000002px;top:701.56px;font-size:12.2px;line-height:14.018px;color:#1c3424;font-weight:normal;">63 550,00</div>
<div class="t" style="right:19.59999999999991px;top:701.56px;font-size:12.2px;line-height:14.018px;color:#1c3424;font-weight:normal;">299 009,90</div>
<div class="t" style="left:278.8px;top:718.56px;font-size:12.2px;line-height:14.018px;color:#1c3424;font-weight:normal;">Внебюджетная деятельность</div>
<div class="t" style="right:470.6px;top:718.56px;font-size:12.2px;line-height:14.018px;color:#1c3424;font-weight:normal;">8 000,00</div>
<div class="t" style="right:19.59999999999991px;top:718.56px;font-size:12.2px;line-height:14.018px;color:#1c3424;font-weight:normal;">8 000,00</div>
<div class="t" style="right:840.4px;top:735.56px;font-size:12.2px;line-height:14.018px;color:#3a3a3a;font-weight:normal;">11</div>
<div class="t" style="left:329.5px;top:735.56px;font-size:12.2px;line-height:14.018px;color:#3a3a3a;font-weight:normal;">Волков Сергей Викторович</div>
<div class="t" style="right:470.6px;top:735.56px;font-size:12.2px;line-height:14.018px;color:#3a3a3a;font-weight:normal;">4 000,00</div>
<div class="t" style="right:19.59999999999991px;top:735.56px;font-size:12.2px;line-height:14.018px;color:#3a3a3a;font-weight:normal;">4 000,00</div>
<div class="t" style="right:840.4px;top:752.56px;font-size:12.2px;line-height:14.018px;color:#3a3a3a;font-weight:normal;">12</div>
<div class="t" style="left:329.5px;top:752.56px;font-size:12.2px;line-height:14.018px;color:#3a3a3a;font-weight:normal;">Медведев Николай Петрович</div>
<div class="t" style="right:470.6px;top:752.56px;font-size:12.2px;line-height:14.018px;color:#3a3a3a;font-weight:normal;">4 000,00</div>
<div class="t" style="right:19.59999999999991px;top:752.56px;font-size:12.2px;line-height:14.018px;color:#3a3a3a;font-weight:normal;">4 000,00</div>
<div class="t" style="left:278.8px;top:769.56px;font-size:12.2px;line-height:14.018px;color:#1c3424;font-weight:normal;">Основная статья финансирования</div>
<div class="t" style="right:470.6px;top:769.56px;font-size:12.2px;line-height:14.018px;color:#1c3424;font-weight:normal;">227 459,90</div>
<div class="t" style="right:356.6px;top:769.56px;font-size:12.2px;line-height:14.018px;color:#1c3424;font-weight:normal;">54 500,00</div>
<div class="t" style="right:225.60000000000002px;top:769.56px;font-size:12.2px;line-height:14.018px;color:#1c3424;font-weight:normal;">9 050,00</div>
<div class="t" style="right:133.60000000000002px;top:769.56px;font-size:12.2px;line-height:14.018px;color:#1c3424;font-weight:normal;">63 550,00</div>
<div class="t" style="right:19.59999999999991px;top:769.56px;font-size:12.2px;line-height:14.018px;color:#1c3424;font-weight:normal;">291 009,90</div>
<div class="t" style="right:840.4px;top:786.56px;font-size:12.2px;line-height:14.018px;color:#3a3a3a;font-weight:normal;">13</div>
<div class="t" style="left:329.5px;top:786.56px;font-size:12.2px;line-height:14.018px;color:#3a3a3a;font-weight:normal;">Белкина Тамара Афанасьевна</div>
<div class="t" style="right:470.6px;top:786.56px;font-size:12.2px;line-height:14.018px;color:#3a3a3a;font-weight:normal;">103 374,90</div>
<div class="t" style="right:356.6px;top:786.56px;font-size:12.2px;line-height:14.018px;color:#3a3a3a;font-weight:normal;">24 000,00</div>
<div class="t" style="right:225.60000000000002px;top:786.56px;font-size:12.2px;line-height:14.018px;color:#3a3a3a;font-weight:normal;">3 600,00</div>
<div class="t" style="right:133.60000000000002px;top:786.56px;font-size:12.2px;line-height:14.018px;color:#3a3a3a;font-weight:normal;">27 600,00</div>
<div class="t" style="right:19.59999999999991px;top:786.56px;font-size:12.2px;line-height:14.018px;color:#3a3a3a;font-weight:normal;">130 974,90</div>
<div class="t" style="right:840.4px;top:803.56px;font-size:12.2px;line-height:14.018px;color:#3a3a3a;font-weight:normal;">14</div>
<div class="t" style="left:329.5px;top:803.56px;font-size:12.2px;line-height:14.018px;color:#3a3a3a;font-weight:normal;">Волков Сергей Викторович</div>
<div class="t" style="right:470.6px;top:803.56px;font-size:12.2px;line-height:14.018px;color:#3a3a3a;font-weight:normal;">52 195,00</div>
<div class="t" style="right:356.6px;top:803.56px;font-size:12.2px;line-height:14.018px;color:#3a3a3a;font-weight:normal;">13 000,00</div>
<div class="t" style="right:225.60000000000002px;top:803.56px;font-size:12.2px;line-height:14.018px;color:#3a3a3a;font-weight:normal;">1 950,00</div>
<div class="t" style="right:133.60000000000002px;top:803.56px;font-size:12.2px;line-height:14.018px;color:#3a3a3a;font-weight:normal;">14 950,00</div>
<div class="t" style="right:19.59999999999991px;top:803.56px;font-size:12.2px;line-height:14.018px;color:#3a3a3a;font-weight:normal;">67 145,00</div>
<div class="t" style="right:840.4px;top:820.56px;font-size:12.2px;line-height:14.018px;color:#3a3a3a;font-weight:normal;">15</div>
<div class="t" style="left:329.5px;top:820.56px;font-size:12.2px;line-height:14.018px;color:#3a3a3a;font-weight:normal;">Медведев Николай Петрович</div>
<div class="t" style="right:470.6px;top:820.56px;font-size:12.2px;line-height:14.018px;color:#3a3a3a;font-weight:normal;">71 890,00</div>
<div class="t" style="right:356.6px;top:820.56px;font-size:12.2px;line-height:14.018px;color:#3a3a3a;font-weight:normal;">17 500,00</div>
<div class="t" style="right:225.60000000000002px;top:820.56px;font-size:12.2px;line-height:14.018px;color:#3a3a3a;font-weight:normal;">3 500,00</div>
<div class="t" style="right:133.60000000000002px;top:820.56px;font-size:12.2px;line-height:14.018px;color:#3a3a3a;font-weight:normal;">21 000,00</div>
<div class="t" style="right:19.59999999999991px;top:820.56px;font-size:12.2px;line-height:14.018px;color:#3a3a3a;font-weight:normal;">92 890,00</div>
<div class="t" style="left:264.2px;top:837.56px;font-size:12.2px;line-height:14.018px;color:#1c3424;font-weight:normal;">Отдел инноваций</div>
<div class="t" style="right:470.6px;top:837.56px;font-size:12.2px;line-height:14.018px;color:#1c3424;font-weight:normal;">1 568,19</div>
<div class="t" style="right:19.59999999999991px;top:837.56px;font-size:12.2px;line-height:14.018px;color:#1c3424;font-weight:normal;">1 568,19</div>
<div class="t" style="left:278.8px;top:854.56px;font-size:12.2px;line-height:14.018px;color:#1c3424;font-weight:normal;">Основная статья финансирования</div>
<div class="t" style="right:470.6px;top:854.56px;font-size:12.2px;line-height:14.018px;color:#1c3424;font-weight:normal;">1 568,19</div>
<div class="t" style="right:19.59999999999991px;top:854.56px;font-size:12.2px;line-height:14.018px;color:#1c3424;font-weight:normal;">1 568,19</div>
<div class="t" style="right:840.4px;top:871.56px;font-size:12.2px;line-height:14.018px;color:#3a3a3a;font-weight:normal;">16</div>
<div class="t" style="left:329.5px;top:871.56px;font-size:12.2px;line-height:14.018px;color:#3a3a3a;font-weight:normal;">Белкина Тамара Афанасьевна</div>
<div class="t" style="right:470.6px;top:871.56px;font-size:12.2px;line-height:14.018px;color:#3a3a3a;font-weight:normal;">1 568,19</div>
<div class="t" style="right:19.59999999999991px;top:871.56px;font-size:12.2px;line-height:14.018px;color:#3a3a3a;font-weight:normal;">1 568,19</div>
<div class="t" style="left:264.2px;top:888.56px;font-size:12.2px;line-height:14.018px;color:#1c3424;font-weight:normal;">Итого</div>
<div class="t" style="right:470.6px;top:888.56px;font-size:12.2px;line-height:14.018px;color:#1c3424;font-weight:normal;">2 054 301,69</div>
<div class="t" style="right:356.6px;top:888.56px;font-size:12.2px;line-height:14.018px;color:#1c3424;font-weight:normal;">450 000,00</div>
<div class="t" style="right:225.60000000000002px;top:888.56px;font-size:12.2px;line-height:14.018px;color:#1c3424;font-weight:normal;">98 700,00</div>
<div class="t" style="right:133.60000000000002px;top:888.56px;font-size:12.2px;line-height:14.018px;color:#1c3424;font-weight:normal;">548 700,00</div>
<div class="t" style="right:19.59999999999991px;top:888.56px;font-size:12.2px;line-height:14.018px;color:#1c3424;font-weight:normal;">2 603 001,69</div>
<div class="t" style="left:264.2px;top:350.76px;font-size:12.2px;line-height:14.018px;color:#1c3020;font-weight:normal;">Подразделение</div>
<div class="t" style="left:264.2px;top:381.76px;font-size:12.2px;line-height:14.018px;color:#1c3020;font-weight:normal;">Статья финансирования</div>
<div class="t" style="left:264.2px;top:398.46px;font-size:12.2px;line-height:14.018px;color:#1c3020;font-weight:normal;">№</div>
<div class="t" style="left:264.2px;top:413.46px;font-size:12.2px;line-height:14.018px;color:#1c3020;font-weight:normal;">п/п</div>
<div class="t" style="left:301.2px;top:398.46px;font-size:12.2px;line-height:14.018px;color:#1c3020;font-weight:normal;">Сотрудник</div>
<div class="t" style="left:551.4px;top:350.76px;font-size:12.2px;line-height:14.018px;color:#1c3020;font-weight:normal;">Сальдо начальное</div>
<div class="t" style="left:551.4px;top:381.76px;font-size:12.2px;line-height:14.018px;color:#1c3020;font-weight:normal;">Сумма</div>
<div class="t" style="left:671.4px;top:350.76px;font-size:12.2px;line-height:14.018px;color:#1c3020;font-weight:normal;">Оклад 000000004</div>
<div class="t" style="left:671.4px;top:381.76px;font-size:12.2px;line-height:14.018px;color:#1c3020;font-weight:normal;">Сумма</div>
<div class="t" style="left:785.4px;top:350.76px;font-size:12.2px;line-height:14.018px;color:#1c3020;font-weight:normal;">Месячная премия</div>
<div class="t" style="left:785.4px;top:365.56px;font-size:12.2px;line-height:14.018px;color:#1c3020;font-weight:normal;">000000011</div>
<div class="t" style="left:785.4px;top:381.76px;font-size:12.2px;line-height:14.018px;color:#1c3020;font-weight:normal;">Сумма</div>
<div class="t" style="left:916.4px;top:350.76px;font-size:12.2px;line-height:14.018px;color:#1c3020;font-weight:normal;">Итого</div>
<div class="t" style="left:916.4px;top:365.56px;font-size:12.2px;line-height:14.018px;color:#1c3020;font-weight:normal;">начислено</div>
<div class="t" style="left:916.4px;top:381.76px;font-size:12.2px;line-height:14.018px;color:#1c3020;font-weight:normal;">Сумма</div>
<div class="t" style="left:1008.4px;top:350.76px;font-size:12.2px;line-height:14.018px;color:#1c3020;font-weight:normal;">Сальдо конечное</div>
<div class="t" style="left:1008.4px;top:381.76px;font-size:12.2px;line-height:14.018px;color:#1c3020;font-weight:normal;">Сумма</div>
<div class="r" style="left:262px;top:234px;width:45px;height:19px;background:#f6f6f6;border-bottom:1px solid #ebebeb;box-sizing:border-box"></div>
<div class="t" style="left:264.3px;top:236.56px;font-size:12.2px;line-height:14.018px;color:#333;font-weight:normal;">Департамент по развитию</div>
<div class="t" style="left:265.3px;top:259.69px;font-size:11.5px;line-height:13.213px;color:#333;font-weight:bold;">СВОД НАЧИСЛЕНИЙ, УДЕРЖАНИЙ, ВЫПЛАТ</div>
<div class="t" style="left:265.3px;top:276.32px;font-size:11.8px;line-height:13.558px;color:#333;font-weight:bold;"> за Январь 2017 г. - Июнь 2017 г.</div>
<div class="t" style="left:264.8px;top:300.66px;font-size:12.2px;line-height:14.018px;color:#333;font-weight:normal;">Отборы:</div>
<div class="t" style="left:308px;top:317.56px;font-size:12.2px;line-height:14.018px;color:#333;font-weight:normal;">Сотрудники: вся организация</div>
<div class="t" style="left:307.8px;top:334.46px;font-size:12.2px;line-height:14.018px;color:#333;font-weight:normal;">Подразделение: Администрация; Бухгалтерия; Отдел развития; Отдел инноваций</div>
<div class="r" style="left:238px;top:454px;width:1px;height:42px;background:#8e8e8e"></div>
<div class="r" style="left:238px;top:496px;width:23px;height:1px;background:#8e8e8e"></div>
<div class="r" style="left:232px;top:448px;width:11px;height:11px;border:1px solid #a0a0a0;border-radius:1px;background:linear-gradient(#fff,#f0f0f0)"></div>
<div class="r" style="left:234px;top:454px;width:9px;height:1px;background:#222"></div>
<div class="r" style="left:238px;top:505px;width:1px;height:42px;background:#8e8e8e"></div>
<div class="r" style="left:238px;top:547px;width:23px;height:1px;background:#8e8e8e"></div>
<div class="r" style="left:232px;top:499px;width:11px;height:11px;border:1px solid #a0a0a0;border-radius:1px;background:linear-gradient(#fff,#f0f0f0)"></div>
<div class="r" style="left:234px;top:505px;width:9px;height:1px;background:#222"></div>
<div class="r" style="left:223px;top:437px;width:1px;height:110px;background:#8e8e8e"></div>
<div class="r" style="left:223px;top:547px;width:38px;height:1px;background:#8e8e8e"></div>
<div class="r" style="left:217px;top:431px;width:11px;height:11px;border:1px solid #a0a0a0;border-radius:1px;background:linear-gradient(#fff,#f0f0f0)"></div>
<div class="r" style="left:219px;top:437px;width:9px;height:1px;background:#222"></div>
<div class="r" style="left:238px;top:573px;width:1px;height:59px;background:#8e8e8e"></div>
<div class="r" style="left:238px;top:632px;width:23px;height:1px;background:#8e8e8e"></div>
<div class="r" style="left:232px;top:567px;width:11px;height:11px;border:1px solid #a0a0a0;border-radius:1px;background:linear-gradient(#fff,#f0f0f0)"></div>
<div class="r" style="left:234px;top:573px;width:9px;height:1px;background:#222"></div>
<div class="r" style="left:238px;top:641px;width:1px;height:59px;background:#8e8e8e"></div>
<div class="r" style="left:238px;top:700px;width:23px;height:1px;background:#8e8e8e"></div>
<div class="r" style="left:232px;top:635px;width:11px;height:11px;border:1px solid #a0a0a0;border-radius:1px;background:linear-gradient(#fff,#f0f0f0)"></div>
<div class="r" style="left:234px;top:641px;width:9px;height:1px;background:#222"></div>
<div class="r" style="left:223px;top:556px;width:1px;height:144px;background:#8e8e8e"></div>
<div class="r" style="left:223px;top:700px;width:38px;height:1px;background:#8e8e8e"></div>
<div class="r" style="left:217px;top:550px;width:11px;height:11px;border:1px solid #a0a0a0;border-radius:1px;background:linear-gradient(#fff,#f0f0f0)"></div>
<div class="r" style="left:219px;top:556px;width:9px;height:1px;background:#222"></div>
<div class="r" style="left:238px;top:726px;width:1px;height:42px;background:#8e8e8e"></div>
<div class="r" style="left:238px;top:768px;width:23px;height:1px;background:#8e8e8e"></div>
<div class="r" style="left:232px;top:720px;width:11px;height:11px;border:1px solid #a0a0a0;border-radius:1px;background:linear-gradient(#fff,#f0f0f0)"></div>
<div class="r" style="left:234px;top:726px;width:9px;height:1px;background:#222"></div>
<div class="r" style="left:238px;top:777px;width:1px;height:59px;background:#8e8e8e"></div>
<div class="r" style="left:238px;top:836px;width:23px;height:1px;background:#8e8e8e"></div>
<div class="r" style="left:232px;top:771px;width:11px;height:11px;border:1px solid #a0a0a0;border-radius:1px;background:linear-gradient(#fff,#f0f0f0)"></div>
<div class="r" style="left:234px;top:777px;width:9px;height:1px;background:#222"></div>
<div class="r" style="left:223px;top:709px;width:1px;height:127px;background:#8e8e8e"></div>
<div class="r" style="left:223px;top:836px;width:38px;height:1px;background:#8e8e8e"></div>
<div class="r" style="left:217px;top:703px;width:11px;height:11px;border:1px solid #a0a0a0;border-radius:1px;background:linear-gradient(#fff,#f0f0f0)"></div>
<div class="r" style="left:219px;top:709px;width:9px;height:1px;background:#222"></div>
<div class="r" style="left:238px;top:862px;width:1px;height:25px;background:#8e8e8e"></div>
<div class="r" style="left:238px;top:887px;width:23px;height:1px;background:#8e8e8e"></div>
<div class="r" style="left:232px;top:856px;width:11px;height:11px;border:1px solid #a0a0a0;border-radius:1px;background:linear-gradient(#fff,#f0f0f0)"></div>
<div class="r" style="left:234px;top:862px;width:9px;height:1px;background:#222"></div>
<div class="r" style="left:223px;top:845px;width:1px;height:42px;background:#8e8e8e"></div>
<div class="r" style="left:223px;top:887px;width:38px;height:1px;background:#8e8e8e"></div>
<div class="r" style="left:217px;top:839px;width:11px;height:11px;border:1px solid #a0a0a0;border-radius:1px;background:linear-gradient(#fff,#f0f0f0)"></div>
<div class="r" style="left:219px;top:845px;width:9px;height:1px;background:#222"></div>
</body></html>
